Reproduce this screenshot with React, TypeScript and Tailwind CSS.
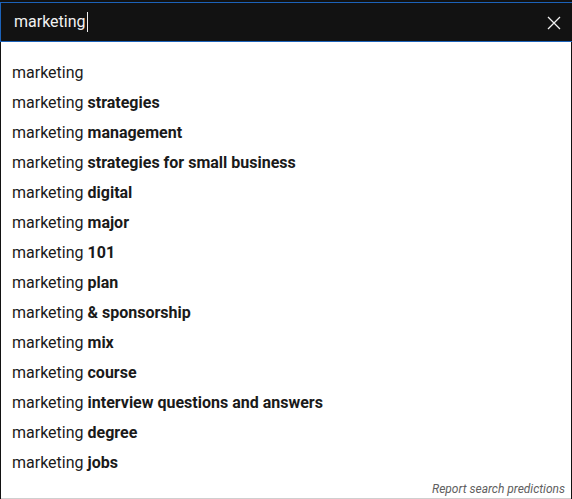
import React from "react";

const items: [string, string][] = [
  ["marketing", ""],
  ["marketing ", "strategies"],
  ["marketing ", "management"],
  ["marketing ", "strategies for small business"],
  ["marketing ", "digital"],
  ["marketing ", "major"],
  ["marketing ", "101"],
  ["marketing ", "plan"],
  ["marketing ", "& sponsorship"],
  ["marketing ", "mix"],
  ["marketing ", "course"],
  ["marketing ", "interview questions and answers"],
  ["marketing ", "degree"],
  ["marketing ", "jobs"],
];

export default function App() {
  return (
    <div className="w-[572px] h-[499px] bg-[#121212] flex flex-col overflow-hidden" style={{ fontFamily: "Roboto, 'Liberation Sans', sans-serif" }}>
      <div className="h-[2px] shrink-0" />
      <div className="h-[40px] shrink-0 border border-[#1c62b9] border-r-0 bg-[#121212] flex items-center pl-[13px] pr-[11px]">
        <div className="flex-1 flex items-center text-[16px] text-[#f1f1f1]">
          <span>marketing</span>
          <span className="w-px h-[20px] bg-[#f1f1f1] ml-[1px]" />
        </div>
        <svg width="14" height="14" viewBox="0 0 14 14" className="mt-[1px]">
          <path d="M1 1L13 13M13 1L1 13" stroke="#f1f1f1" strokeWidth="1.3" />
        </svg>
      </div>
      <div className="flex-1 bg-white ml-[1px] mr-[1px] border-b-2 border-[#cfcfcf] flex flex-col pt-[16px]">
        {items.map(([a, b], i) => (
          <div key={i} className="h-[30px] flex items-center pl-[11px] text-[16px] text-[#1a1a1a] whitespace-pre">
            <span>{a}</span>
            {b && <span className="font-bold">{b}</span>}
          </div>
        ))}
        <div className="flex justify-end pr-[6px] pt-[2px] text-[12px] italic text-[#606060]">
          Report search predictions
        </div>
      </div>
    </div>
  );
}
